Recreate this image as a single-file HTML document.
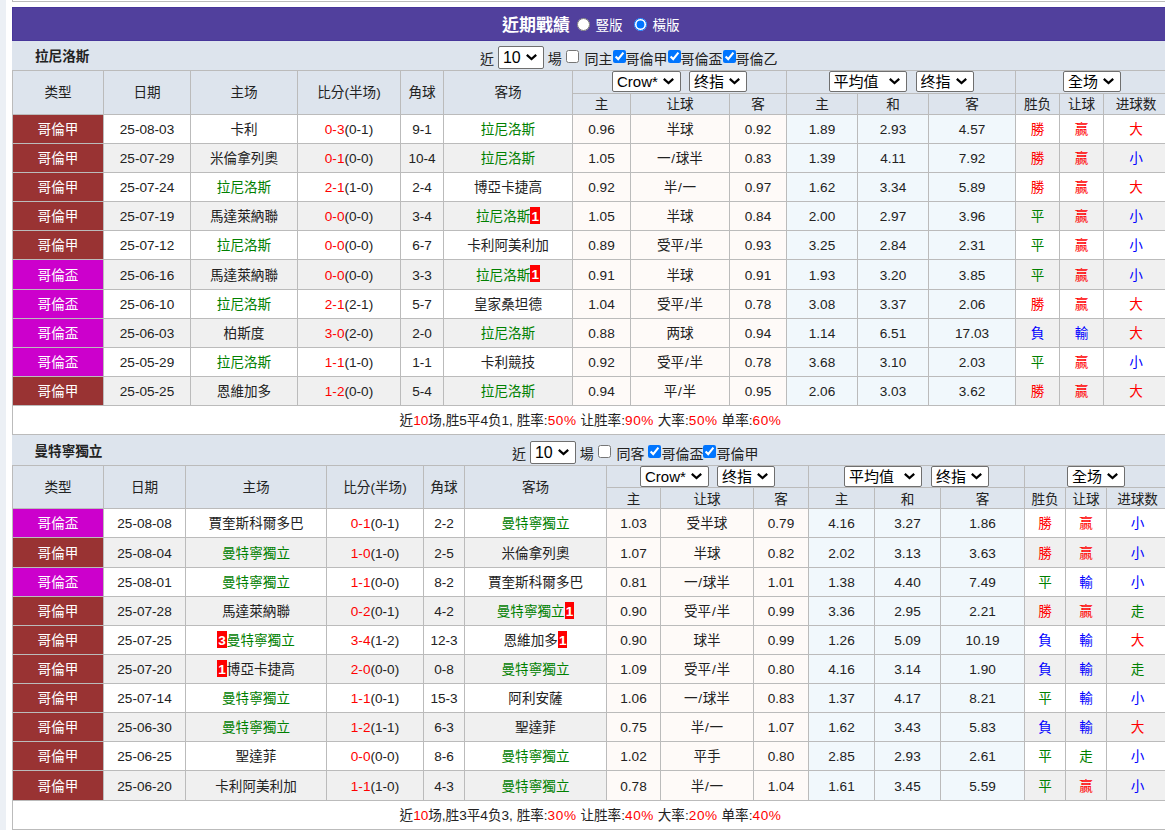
<!DOCTYPE html>
<html lang="zh-Hant">
<head>
<meta charset="utf-8">
<title>近期戰績</title>
<style>
html,body{margin:0;padding:0;}
body{background:#ecf0f5;font-family:"Liberation Sans","Noto Sans CJK TC",sans-serif;font-size:13.6px;color:#222;overflow:hidden;width:1165px;height:830px;position:relative;}
.wrap{position:absolute;left:6px;top:0;width:1200px;height:830px;background:#fff;}
.topbox{position:absolute;left:6px;top:-10px;width:1200px;height:12px;border:1px solid #bbb;border-top:none;box-sizing:border-box;border-width:0 0 1px 1px;}
.title{position:absolute;left:6px;top:7px;width:1156px;height:34px;box-sizing:border-box;background:#51409d;border:1px solid #47369a;color:#fff;}
.title .tt{position:absolute;left:489px;top:2px;line-height:32px;font-size:17px;font-weight:bold;white-space:nowrap;}
.rl{position:absolute;top:0;height:32px;line-height:32px;font-size:13.6px;white-space:nowrap;}
.rl input{margin:0;width:13px;height:13px;position:absolute;top:10px;left:0;}
.rl span{position:absolute;left:18.5px;top:2px;}
.rl1{left:564px;}
.rl2{left:621px;}
.team{position:absolute;left:6px;width:1156px;background:#dde4ed;box-sizing:border-box;}
.team1{top:41px;height:29px;}
.team2{top:434px;height:31px;border-top:1px solid #bbb;}
.team .tn{position:absolute;left:23px;top:1px;font-weight:bold;line-height:29px;white-space:nowrap;}
.team2 .tn{line-height:30px;top:2px;left:22.5px;}
.ctl{position:absolute;top:4px;white-space:nowrap;line-height:29px;font-size:14px;}
.team2 .ctl{line-height:30px;}
.ctl1{left:468px;}
.ctl2{left:500px;}
.ctl input{margin:0;width:13px;height:13px;vertical-align:1px;}
.ctl input.first{margin-right:2px;}
.selw{display:inline-block;position:relative;vertical-align:baseline;}
.selw svg{position:absolute;right:7px;top:50%;margin-top:-3.5px;width:11px;height:7px;pointer-events:none;}
select{-webkit-appearance:none;appearance:none;font-family:"Liberation Sans","Noto Sans CJK TC",sans-serif;color:#000;background:#fff;border:1px solid #6f6f6f;border-radius:2px;box-sizing:border-box;margin:0;padding:0 0 0 4px;display:block;}
.w1{top:-1px;}
.w1 select{width:46px;height:23px;font-size:16px;padding-top:1px;}
.w2{vertical-align:top;}
.w2 select{height:21px;font-size:15px;}
.w2.gap{margin-left:8px;}
table.grid{position:absolute;left:6px;width:1156px;table-layout:fixed;border-collapse:separate;border-spacing:0;}
table.t1{top:70px;}
table.t2{top:465px;}
.grid th,.grid td{box-sizing:border-box;border-left:1px solid #bbb;border-top:1px solid #bbb;padding:0;text-align:center;vertical-align:middle;font-weight:normal;white-space:nowrap;overflow:hidden;line-height:16px;}
.grid th{background:#dde4ed;}
.grid tr.sub th{padding-top:2px;}
.grid td{padding-top:2px;}
.grid tr.odd td{background:#fff;}
.grid tr.even td{background:#f0f0f0;}
.grid tr td.hc{background:#fefaf8;}
.grid tr td.eu{background:#f1f8fc;}
.grid tr td.lgA{background:#993333;color:#fff;}
.grid tr td.lgB{background:#cc00cc;color:#fff;}
.grid th.selc{vertical-align:top;font-size:0;line-height:0;}
.sw{display:inline-block;margin-top:0px;white-space:nowrap;}
.hl{color:#008000;}
.r{color:#ff0000;}
.gr{color:#008000;}
.b{color:#0000ff;}
.rc{display:inline-block;background:#ff0000;color:#fff;font-weight:bold;line-height:17px;height:17px;box-sizing:border-box;padding:1px 1px 0 1px;vertical-align:middle;position:relative;top:-2px;margin:-2px 0;overflow:hidden;}
.grid tr.sum td{background:#fff;}
table.t2 tr.sum td{border-bottom:1px solid #bbb;}
.pc{letter-spacing:0.6px;}
.sw2 .gap{margin-left:9px;}
.t2 .sw3{margin-right:1px;}
.t2 tr.hd th[rowspan]{padding-top:2px;}
.grid.t2 tr.sub th{padding-top:4px;}
.sl{margin:0 0.7px;}

</style>
</head>
<body>
<div class="wrap">
<div class="topbox"></div>
<div class="title"><span class="tt">近期戰績</span><label class="rl rl1"><input type="radio" name="v"><span>豎版</span></label><label class="rl rl2"><input type="radio" name="v" checked><span>橫版</span></label></div>
<div class="team team1"><span class="tn">拉尼洛斯</span><span class="ctl ctl1">近 <span class="selw w1"><select><option>10</option></select><svg viewBox="0 0 11 7"><path d="M0.8 0.9 L5.5 5.0 L10.2 0.9" fill="none" stroke="#000" stroke-width="2.3"/></svg></span> 場 <input type="checkbox" class="first"> 同主<input type="checkbox" checked>哥倫甲<input type="checkbox" checked>哥倫盃<input type="checkbox" checked>哥倫乙</span></div>
<table class="grid t1" cellspacing="0" cellpadding="0">
<colgroup><col style="width:91px"><col style="width:87px"><col style="width:107px"><col style="width:103px"><col style="width:43px"><col style="width:129px"><col style="width:58px"><col style="width:99px"><col style="width:57px"><col style="width:71px"><col style="width:71px"><col style="width:87px"><col style="width:44px"><col style="width:44px"><col style="width:65px"></colgroup>
<tr class="hd" style="height:23px">
<th rowspan="2">类型</th>
<th rowspan="2">日期</th>
<th rowspan="2">主场</th>
<th rowspan="2">比分(半场)</th>
<th rowspan="2">角球</th>
<th rowspan="2">客场</th>
<th colspan="3" class="selc"><span class="sw sw1"><span class="selw w2"><select style="width:69px"><option>Crow*</option></select><svg viewBox="0 0 11 7"><path d="M0.8 0.9 L5.5 5.0 L10.2 0.9" fill="none" stroke="#000" stroke-width="2.3"/></svg></span><span class="selw w2 gap"><select style="width:58px"><option>终指</option></select><svg viewBox="0 0 11 7"><path d="M0.8 0.9 L5.5 5.0 L10.2 0.9" fill="none" stroke="#000" stroke-width="2.3"/></svg></span></span></th>
<th colspan="3" class="selc"><span class="sw sw2"><span class="selw w2"><select style="width:78px"><option>平均值</option></select><svg viewBox="0 0 11 7"><path d="M0.8 0.9 L5.5 5.0 L10.2 0.9" fill="none" stroke="#000" stroke-width="2.3"/></svg></span><span class="selw w2 gap"><select style="width:58px"><option>终指</option></select><svg viewBox="0 0 11 7"><path d="M0.8 0.9 L5.5 5.0 L10.2 0.9" fill="none" stroke="#000" stroke-width="2.3"/></svg></span></span></th>
<th colspan="3" class="selc"><span class="sw sw3"><span class="selw w2"><select style="width:58px"><option>全场</option></select><svg viewBox="0 0 11 7"><path d="M0.8 0.9 L5.5 5.0 L10.2 0.9" fill="none" stroke="#000" stroke-width="2.3"/></svg></span></span></th>
</tr>
<tr class="hd sub" style="height:21px">
<th>主</th>
<th>让球</th>
<th>客</th>
<th>主</th>
<th>和</th>
<th>客</th>
<th>胜负</th>
<th>让球</th>
<th>进球数</th>
</tr>
<tr class="odd" style="height:29px">
<td class="lgA">哥倫甲</td>
<td>25-08-03</td>
<td><span>卡利</span></td>
<td><span class="r">0-3</span>(0-1)</td>
<td>9-1</td>
<td><span class="hl">拉尼洛斯</span></td>
<td class="hc">0.96</td>
<td class="hc">半球</td>
<td class="hc">0.92</td>
<td class="eu">1.89</td>
<td class="eu">2.93</td>
<td class="eu">4.57</td>
<td class="r">勝</td>
<td class="r">贏</td>
<td class="r">大</td>
</tr>
<tr class="even" style="height:29px">
<td class="lgA">哥倫甲</td>
<td>25-07-29</td>
<td><span>米倫拿列奧</span></td>
<td><span class="r">0-1</span>(0-0)</td>
<td>10-4</td>
<td><span class="hl">拉尼洛斯</span></td>
<td class="hc">1.05</td>
<td class="hc">一<span class="sl">/</span>球半</td>
<td class="hc">0.83</td>
<td class="eu">1.39</td>
<td class="eu">4.11</td>
<td class="eu">7.92</td>
<td class="r">勝</td>
<td class="r">贏</td>
<td class="b">小</td>
</tr>
<tr class="odd" style="height:29px">
<td class="lgA">哥倫甲</td>
<td>25-07-24</td>
<td><span class="hl">拉尼洛斯</span></td>
<td><span class="r">2-1</span>(1-0)</td>
<td>2-4</td>
<td><span>博亞卡捷高</span></td>
<td class="hc">0.92</td>
<td class="hc">半<span class="sl">/</span>一</td>
<td class="hc">0.97</td>
<td class="eu">1.62</td>
<td class="eu">3.34</td>
<td class="eu">5.89</td>
<td class="r">勝</td>
<td class="r">贏</td>
<td class="r">大</td>
</tr>
<tr class="even" style="height:29px">
<td class="lgA">哥倫甲</td>
<td>25-07-19</td>
<td><span>馬達萊納聯</span></td>
<td><span class="r">0-0</span>(0-0)</td>
<td>3-4</td>
<td><span class="hl">拉尼洛斯</span><span class="rc">1</span></td>
<td class="hc">1.05</td>
<td class="hc">半球</td>
<td class="hc">0.84</td>
<td class="eu">2.00</td>
<td class="eu">2.97</td>
<td class="eu">3.96</td>
<td class="gr">平</td>
<td class="r">贏</td>
<td class="b">小</td>
</tr>
<tr class="odd" style="height:29px">
<td class="lgA">哥倫甲</td>
<td>25-07-12</td>
<td><span class="hl">拉尼洛斯</span></td>
<td><span class="r">0-0</span>(0-0)</td>
<td>6-7</td>
<td><span>卡利阿美利加</span></td>
<td class="hc">0.89</td>
<td class="hc">受平<span class="sl">/</span>半</td>
<td class="hc">0.93</td>
<td class="eu">3.25</td>
<td class="eu">2.84</td>
<td class="eu">2.31</td>
<td class="gr">平</td>
<td class="r">贏</td>
<td class="b">小</td>
</tr>
<tr class="even" style="height:30px">
<td class="lgB">哥倫盃</td>
<td>25-06-16</td>
<td><span>馬達萊納聯</span></td>
<td><span class="r">0-0</span>(0-0)</td>
<td>3-3</td>
<td><span class="hl">拉尼洛斯</span><span class="rc">1</span></td>
<td class="hc">0.91</td>
<td class="hc">半球</td>
<td class="hc">0.91</td>
<td class="eu">1.93</td>
<td class="eu">3.20</td>
<td class="eu">3.85</td>
<td class="gr">平</td>
<td class="r">贏</td>
<td class="b">小</td>
</tr>
<tr class="odd" style="height:29px">
<td class="lgB">哥倫盃</td>
<td>25-06-10</td>
<td><span class="hl">拉尼洛斯</span></td>
<td><span class="r">2-1</span>(2-1)</td>
<td>5-7</td>
<td><span>皇家桑坦德</span></td>
<td class="hc">1.04</td>
<td class="hc">受平<span class="sl">/</span>半</td>
<td class="hc">0.78</td>
<td class="eu">3.08</td>
<td class="eu">3.37</td>
<td class="eu">2.06</td>
<td class="r">勝</td>
<td class="r">贏</td>
<td class="r">大</td>
</tr>
<tr class="even" style="height:29px">
<td class="lgB">哥倫盃</td>
<td>25-06-03</td>
<td><span>柏斯度</span></td>
<td><span class="r">3-0</span>(2-0)</td>
<td>2-0</td>
<td><span class="hl">拉尼洛斯</span></td>
<td class="hc">0.88</td>
<td class="hc">两球</td>
<td class="hc">0.94</td>
<td class="eu">1.14</td>
<td class="eu">6.51</td>
<td class="eu">17.03</td>
<td class="b">負</td>
<td class="b">輸</td>
<td class="r">大</td>
</tr>
<tr class="odd" style="height:29px">
<td class="lgB">哥倫盃</td>
<td>25-05-29</td>
<td><span class="hl">拉尼洛斯</span></td>
<td><span class="r">1-1</span>(1-0)</td>
<td>1-1</td>
<td><span>卡利競技</span></td>
<td class="hc">0.92</td>
<td class="hc">受平<span class="sl">/</span>半</td>
<td class="hc">0.78</td>
<td class="eu">3.68</td>
<td class="eu">3.10</td>
<td class="eu">2.03</td>
<td class="gr">平</td>
<td class="r">贏</td>
<td class="b">小</td>
</tr>
<tr class="even" style="height:29px">
<td class="lgA">哥倫甲</td>
<td>25-05-25</td>
<td><span>恩維加多</span></td>
<td><span class="r">1-2</span>(0-0)</td>
<td>5-4</td>
<td><span class="hl">拉尼洛斯</span></td>
<td class="hc">0.94</td>
<td class="hc">平<span class="sl">/</span>半</td>
<td class="hc">0.95</td>
<td class="eu">2.06</td>
<td class="eu">3.03</td>
<td class="eu">3.62</td>
<td class="r">勝</td>
<td class="r">贏</td>
<td class="r">大</td>
</tr>
<tr class="sum" style="height:29px"><td colspan="15">近<span class="r">10</span>场,胜5平4负1, 胜率:<span class="r pc">50%</span> 让胜率:<span class="r pc">90%</span> 大率:<span class="r pc">50%</span> 单率:<span class="r pc">60%</span></td></tr>
</table>
<div class="team team2"><span class="tn">曼特寧獨立</span><span class="ctl ctl2">近 <span class="selw w1"><select><option>10</option></select><svg viewBox="0 0 11 7"><path d="M0.8 0.9 L5.5 5.0 L10.2 0.9" fill="none" stroke="#000" stroke-width="2.3"/></svg></span> 場 <input type="checkbox" class="first"> 同客 <input type="checkbox" checked>哥倫盃<input type="checkbox" checked>哥倫甲</span></div>
<table class="grid t2" cellspacing="0" cellpadding="0">
<colgroup><col style="width:91px"><col style="width:82px"><col style="width:141px"><col style="width:97px"><col style="width:41px"><col style="width:142px"><col style="width:54px"><col style="width:93px"><col style="width:55px"><col style="width:66px"><col style="width:66px"><col style="width:84px"><col style="width:41px"><col style="width:41px"><col style="width:62px"></colgroup>
<tr class="hd" style="height:22px">
<th rowspan="2">类型</th>
<th rowspan="2">日期</th>
<th rowspan="2">主场</th>
<th rowspan="2">比分(半场)</th>
<th rowspan="2">角球</th>
<th rowspan="2">客场</th>
<th colspan="3" class="selc"><span class="sw sw1"><span class="selw w2"><select style="width:69px"><option>Crow*</option></select><svg viewBox="0 0 11 7"><path d="M0.8 0.9 L5.5 5.0 L10.2 0.9" fill="none" stroke="#000" stroke-width="2.3"/></svg></span><span class="selw w2 gap"><select style="width:58px"><option>终指</option></select><svg viewBox="0 0 11 7"><path d="M0.8 0.9 L5.5 5.0 L10.2 0.9" fill="none" stroke="#000" stroke-width="2.3"/></svg></span></span></th>
<th colspan="3" class="selc"><span class="sw sw2"><span class="selw w2"><select style="width:78px"><option>平均值</option></select><svg viewBox="0 0 11 7"><path d="M0.8 0.9 L5.5 5.0 L10.2 0.9" fill="none" stroke="#000" stroke-width="2.3"/></svg></span><span class="selw w2 gap"><select style="width:58px"><option>终指</option></select><svg viewBox="0 0 11 7"><path d="M0.8 0.9 L5.5 5.0 L10.2 0.9" fill="none" stroke="#000" stroke-width="2.3"/></svg></span></span></th>
<th colspan="3" class="selc"><span class="sw sw3"><span class="selw w2"><select style="width:58px"><option>全场</option></select><svg viewBox="0 0 11 7"><path d="M0.8 0.9 L5.5 5.0 L10.2 0.9" fill="none" stroke="#000" stroke-width="2.3"/></svg></span></span></th>
</tr>
<tr class="hd sub" style="height:21px">
<th>主</th>
<th>让球</th>
<th>客</th>
<th>主</th>
<th>和</th>
<th>客</th>
<th>胜负</th>
<th>让球</th>
<th>进球数</th>
</tr>
<tr class="odd" style="height:29px">
<td class="lgB">哥倫盃</td>
<td>25-08-08</td>
<td><span>賈奎斯科爾多巴</span></td>
<td><span class="r">0-1</span>(0-1)</td>
<td>2-2</td>
<td><span class="hl">曼特寧獨立</span></td>
<td class="hc">1.03</td>
<td class="hc">受半球</td>
<td class="hc">0.79</td>
<td class="eu">4.16</td>
<td class="eu">3.27</td>
<td class="eu">1.86</td>
<td class="r">勝</td>
<td class="r">贏</td>
<td class="b">小</td>
</tr>
<tr class="even" style="height:30px">
<td class="lgA">哥倫甲</td>
<td>25-08-04</td>
<td><span class="hl">曼特寧獨立</span></td>
<td><span class="r">1-0</span>(1-0)</td>
<td>2-5</td>
<td><span>米倫拿列奧</span></td>
<td class="hc">1.07</td>
<td class="hc">半球</td>
<td class="hc">0.82</td>
<td class="eu">2.02</td>
<td class="eu">3.13</td>
<td class="eu">3.63</td>
<td class="r">勝</td>
<td class="r">贏</td>
<td class="b">小</td>
</tr>
<tr class="odd" style="height:29px">
<td class="lgB">哥倫盃</td>
<td>25-08-01</td>
<td><span class="hl">曼特寧獨立</span></td>
<td><span class="r">1-1</span>(0-0)</td>
<td>8-2</td>
<td><span>賈奎斯科爾多巴</span></td>
<td class="hc">0.81</td>
<td class="hc">一<span class="sl">/</span>球半</td>
<td class="hc">1.01</td>
<td class="eu">1.38</td>
<td class="eu">4.40</td>
<td class="eu">7.49</td>
<td class="gr">平</td>
<td class="b">輸</td>
<td class="b">小</td>
</tr>
<tr class="even" style="height:29px">
<td class="lgA">哥倫甲</td>
<td>25-07-28</td>
<td><span>馬達萊納聯</span></td>
<td><span class="r">0-2</span>(0-1)</td>
<td>4-2</td>
<td><span class="hl">曼特寧獨立</span><span class="rc">1</span></td>
<td class="hc">0.90</td>
<td class="hc">受平<span class="sl">/</span>半</td>
<td class="hc">0.99</td>
<td class="eu">3.36</td>
<td class="eu">2.95</td>
<td class="eu">2.21</td>
<td class="r">勝</td>
<td class="r">贏</td>
<td class="gr">走</td>
</tr>
<tr class="odd" style="height:29px">
<td class="lgA">哥倫甲</td>
<td>25-07-25</td>
<td><span class="rc">3</span><span class="hl">曼特寧獨立</span></td>
<td><span class="r">3-4</span>(1-2)</td>
<td>12-3</td>
<td><span>恩維加多</span><span class="rc">1</span></td>
<td class="hc">0.90</td>
<td class="hc">球半</td>
<td class="hc">0.99</td>
<td class="eu">1.26</td>
<td class="eu">5.09</td>
<td class="eu">10.19</td>
<td class="b">負</td>
<td class="b">輸</td>
<td class="r">大</td>
</tr>
<tr class="even" style="height:29px">
<td class="lgA">哥倫甲</td>
<td>25-07-20</td>
<td><span class="rc">1</span><span>博亞卡捷高</span></td>
<td><span class="r">2-0</span>(0-0)</td>
<td>0-8</td>
<td><span class="hl">曼特寧獨立</span></td>
<td class="hc">1.09</td>
<td class="hc">受平<span class="sl">/</span>半</td>
<td class="hc">0.80</td>
<td class="eu">4.16</td>
<td class="eu">3.14</td>
<td class="eu">1.90</td>
<td class="b">負</td>
<td class="b">輸</td>
<td class="gr">走</td>
</tr>
<tr class="odd" style="height:29px">
<td class="lgA">哥倫甲</td>
<td>25-07-14</td>
<td><span class="hl">曼特寧獨立</span></td>
<td><span class="r">1-1</span>(0-1)</td>
<td>15-3</td>
<td><span>阿利安薩</span></td>
<td class="hc">1.06</td>
<td class="hc">一<span class="sl">/</span>球半</td>
<td class="hc">0.83</td>
<td class="eu">1.37</td>
<td class="eu">4.17</td>
<td class="eu">8.21</td>
<td class="gr">平</td>
<td class="b">輸</td>
<td class="b">小</td>
</tr>
<tr class="even" style="height:29px">
<td class="lgA">哥倫甲</td>
<td>25-06-30</td>
<td><span class="hl">曼特寧獨立</span></td>
<td><span class="r">1-2</span>(1-1)</td>
<td>6-3</td>
<td><span>聖達菲</span></td>
<td class="hc">0.75</td>
<td class="hc">半<span class="sl">/</span>一</td>
<td class="hc">1.07</td>
<td class="eu">1.62</td>
<td class="eu">3.43</td>
<td class="eu">5.83</td>
<td class="b">負</td>
<td class="b">輸</td>
<td class="r">大</td>
</tr>
<tr class="odd" style="height:29px">
<td class="lgA">哥倫甲</td>
<td>25-06-25</td>
<td><span>聖達菲</span></td>
<td><span class="r">0-0</span>(0-0)</td>
<td>8-6</td>
<td><span class="hl">曼特寧獨立</span></td>
<td class="hc">1.02</td>
<td class="hc">平手</td>
<td class="hc">0.80</td>
<td class="eu">2.85</td>
<td class="eu">2.93</td>
<td class="eu">2.61</td>
<td class="gr">平</td>
<td class="gr">走</td>
<td class="b">小</td>
</tr>
<tr class="even" style="height:30px">
<td class="lgA">哥倫甲</td>
<td>25-06-20</td>
<td><span>卡利阿美利加</span></td>
<td><span class="r">1-1</span>(1-0)</td>
<td>4-3</td>
<td><span class="hl">曼特寧獨立</span></td>
<td class="hc">0.78</td>
<td class="hc">半<span class="sl">/</span>一</td>
<td class="hc">1.04</td>
<td class="eu">1.61</td>
<td class="eu">3.45</td>
<td class="eu">5.59</td>
<td class="gr">平</td>
<td class="r">贏</td>
<td class="b">小</td>
</tr>
<tr class="sum" style="height:30px"><td colspan="15">近<span class="r">10</span>场,胜3平4负3, 胜率:<span class="r pc">30%</span> 让胜率:<span class="r pc">40%</span> 大率:<span class="r pc">20%</span> 单率:<span class="r pc">40%</span></td></tr>
</table>
</div>
</body>
</html>
